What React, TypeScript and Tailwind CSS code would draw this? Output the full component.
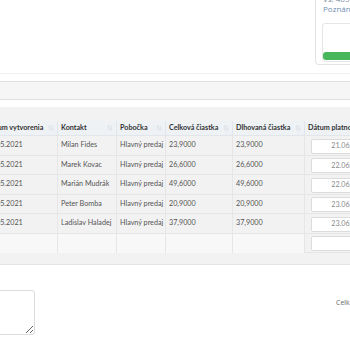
import { ArrowUpDown } from "lucide-react";

const COLS = [
  { label: "Dátum vytvorenia", sort: true },
  { label: "Kontakt", sort: true },
  { label: "Pobočka", sort: true },
  { label: "Celková čiastka", sort: true },
  { label: "Dlhovaná čiastka", sort: true },
  { label: "Dátum platnosti", sort: false },
];

const ROWS = [
  { created: "22.05.2021", contact: "Milan Fides", branch: "Hlavný predaj", total: "23,9000", due: "23,9000", date: "21.06.2021" },
  { created: "23.05.2021", contact: "Marek Kovac", branch: "Hlavný predaj", total: "26,6000", due: "26,6000", date: "22.06.2021" },
  { created: "23.05.2021", contact: "Marián Mudrák", branch: "Hlavný predaj", total: "49,6000", due: "49,6000", date: "22.06.2021" },
  { created: "24.05.2021", contact: "Peter Bomba", branch: "Hlavný predaj", total: "20,9000", due: "20,9000", date: "23.06.2021" },
  { created: "24.05.2021", contact: "Ladislav Haladej", branch: "Hlavný predaj", total: "37,9000", due: "37,9000", date: "23.06.2021" },
];

function Cell({ children }: { children?: React.ReactNode }) {
  return (
    <div className="h-[19.5px] flex items-center pl-[3px] border-r border-b border-[#e6e6e6] whitespace-nowrap overflow-hidden text-[#555]">
      {children}
    </div>
  );
}

function DateCell({ value }: { value?: string }) {
  return (
    <div className="h-[19.5px] flex items-end pl-[6px] pb-[1px] border-b border-[#e6e6e6]">
      <div className="h-[15px] w-full flex items-center justify-end pr-[4px] bg-white border border-[#dcdcdc] rounded-[2px] text-[#8a8a8a] whitespace-nowrap">
        {value}
      </div>
    </div>
  );
}

export default function App() {
  return (
    <div className="w-[350px] h-[350px] overflow-hidden bg-white font-['Open_Sans',sans-serif] text-[7px] leading-[10px]">
      {/* top area with the side panel */}
      <div className="h-[74px] flex justify-end border-b border-[#efefef]">
        <div className="w-[70px] -mr-[35px] -mt-[6px] h-[71px] shrink-0 border border-t-0 border-[#e4e4e4] rounded-bl-[4px] pl-[7px] text-[8px] leading-[10px]">
          <div className="text-[#7d8ea3] whitespace-nowrap">Vs. 4650012021</div>
          <div className="text-[#6f8fb3] whitespace-nowrap">Poznámka</div>
          <div className="mt-[9px] -ml-[1px] h-[39px] border border-[#e6e6e6] rounded-[3px] flex flex-col justify-end pb-[1px]">
            <div className="h-[8px] rounded-[3px] bg-[#47b75c]" />
          </div>
        </div>
      </div>

      <div className="h-[7px]" />
      <div className="h-[19px] bg-[#f6f6f6] border-y border-[#e1e1e1]" />
      <div className="h-[7px]" />

      {/* table panel */}
      <div className="h-[158px] bg-[#f2f2f2] border-b border-[#e3e3e3] pt-[14px] font-['Lato',sans-serif] text-[7.2px]">
        <div className="-ml-[17px] grid grid-cols-[75px_59px_49px_67px_72px_68px] w-[390px]">
          {COLS.map((c) => (
            <div
              key={c.label}
              className="h-[15px] flex items-center justify-between pl-[3px] pr-[3px] bg-[#eef2f5] border-r border-b border-[#e2e6ea] font-bold text-[#333] whitespace-nowrap overflow-hidden"
            >
              <span>{c.label}</span>
              {c.sort && <ArrowUpDown size={6} className="text-[#c5cad0] shrink-0" strokeWidth={1.5} />}
            </div>
          ))}
          {ROWS.map((r) => (
            <div key={r.contact} className="contents">
              <Cell>{r.created}</Cell>
              <Cell>{r.contact}</Cell>
              <Cell>{r.branch}</Cell>
              <Cell>{r.total}</Cell>
              <Cell>{r.due}</Cell>
              <DateCell value={r.date} />
            </div>
          ))}
          <div className="contents">
            <div className="h-[19.5px] bg-[#f8f8f8] border-r border-[#e6e6e6]" />
            <div className="h-[19.5px] bg-[#f8f8f8] border-r border-[#e6e6e6]" />
            <div className="h-[19.5px] bg-[#f8f8f8] border-r border-[#e6e6e6]" />
            <div className="h-[19.5px] bg-[#f8f8f8] border-r border-[#e6e6e6]" />
            <div className="h-[19.5px] bg-[#f8f8f8] border-r border-[#e6e6e6]" />
            <DateCell />
          </div>
        </div>
      </div>

      {/* bottom: note + total */}
      <div className="flex justify-between items-start pt-[25px]">
        <textarea className="-ml-[15px] w-[50px] h-[45px] border border-[#dcdcdc] rounded-[3px] bg-white resize" />
        <div className="mt-[8px] w-[14px] overflow-visible whitespace-nowrap text-[#666]">Celková suma</div>
      </div>
    </div>
  );
}
